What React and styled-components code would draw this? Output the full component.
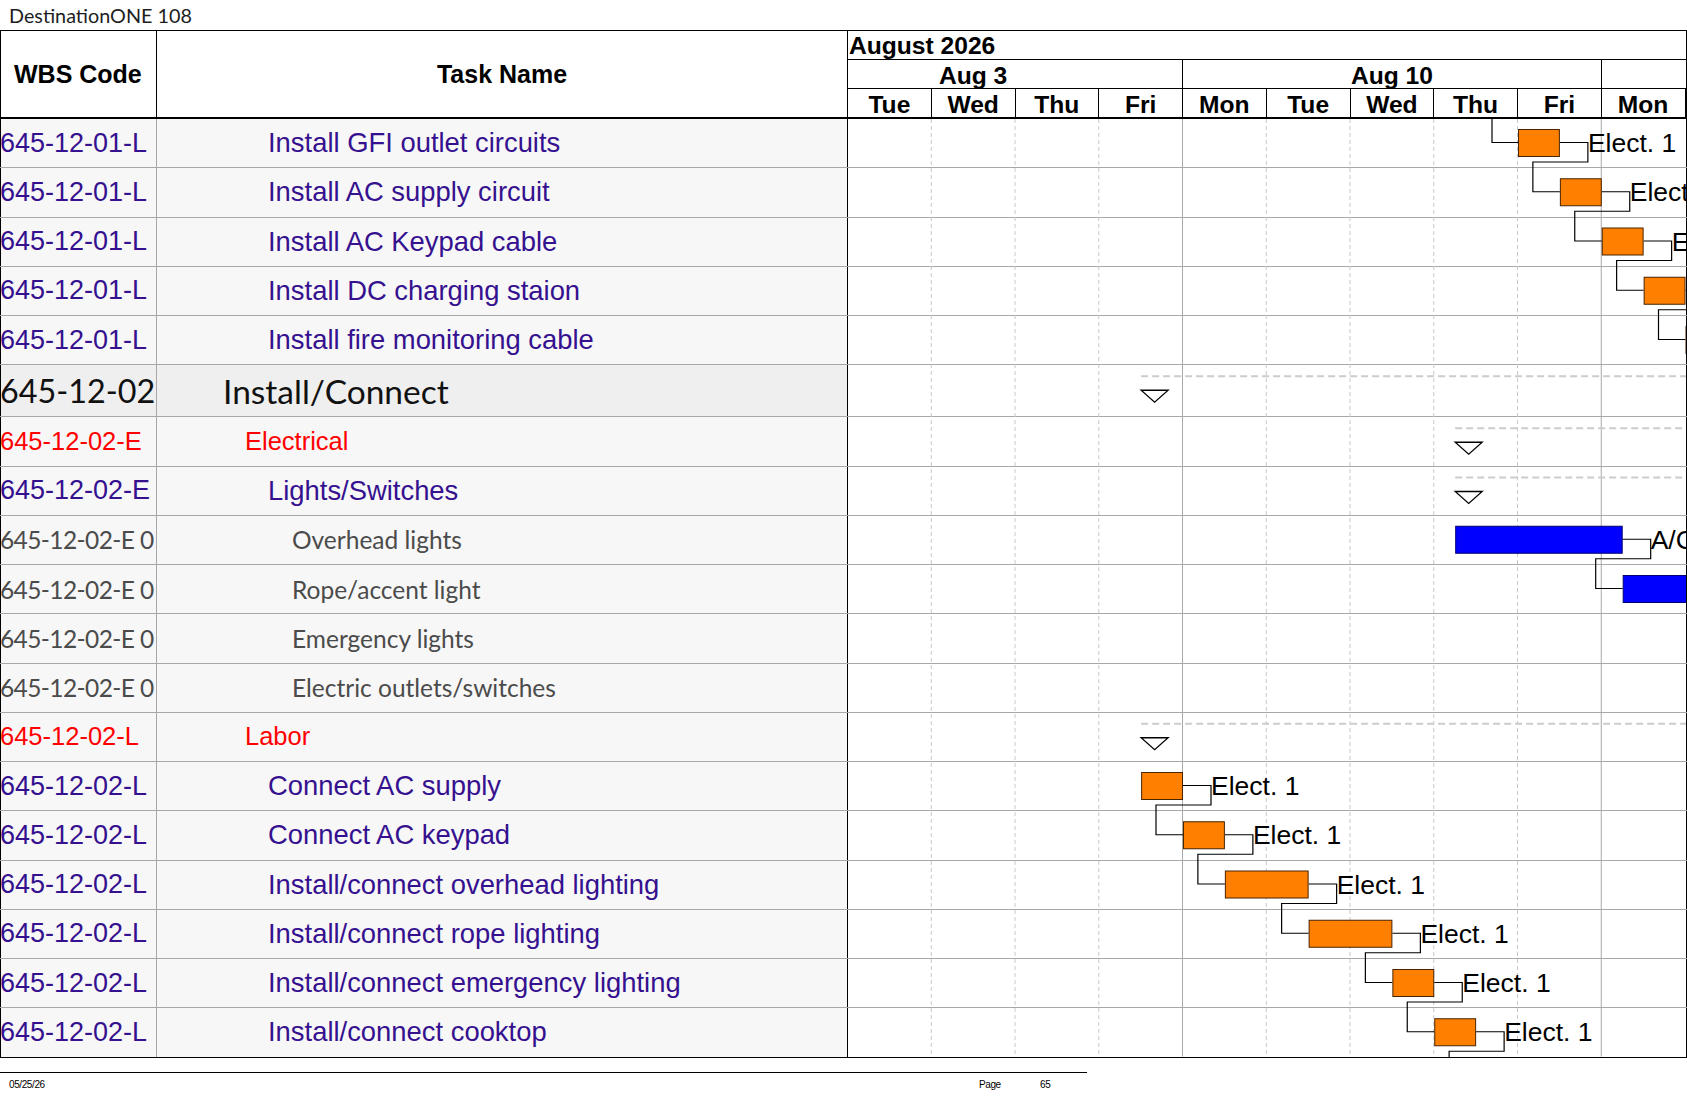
import React from 'react'
import styled, { createGlobalStyle } from 'styled-components'

const DAY = 83.75
const BAR_H = 27
const ORANGE = `#ff8000`
const BLUE = `#0000ff`

const GlobalStyle = createGlobalStyle`
  html, body { margin: 0; padding: 0; background: #fff; }
  body { font-family: "Liberation Sans", Arial, sans-serif; }
  * { box-sizing: border-box; }
`

const Page = styled.div`
  width: 1687px;
  height: 1097px;
  overflow: hidden;
  background: #fff;
`

const Title = styled.div`
  height: 30px;
  padding-left: 9px;
  display: flex;
  align-items: center;
  font-family: Lato, "Open Sans", sans-serif;
  font-size: 19.8px;
  color: #1e1e1e;
`

const Table = styled.div`
  border-top: 1px solid #000;
`

const Header = styled.div`
  display: grid;
  grid-template-columns: 157px 691px 839px;
  height: 88px;
  border-bottom: 2px solid #000;
`

const HeadCell = styled.div`
  display: flex;
  align-items: center;
  justify-content: ${p => p.$center ? `center` : `flex-start`};
  padding-left: ${p => p.$center ? 0 : 13}px;
  padding-top: 1px;
  border-right: 1px solid #000;
  border-left: ${p => p.$first ? `1px solid #000` : `none`};
  font-weight: bold;
  font-size: 25px;
  color: #000;
`

const Timescale = styled.div`
  display: flex;
  flex-direction: column;
  border-right: 1px solid #000;
  overflow: hidden;
`

const MonthRow = styled.div`
  height: 29px;
  border-bottom: 1px solid #000;
  padding-left: 1px;
  font-weight: bold;
  font-size: 24.6px;
  line-height: 30px;
  color: #000;
`

const TierRow = styled.div`
  display: flex;
  height: ${p => p.$h}px;
  margin-left: -${DAY}px;
  border-bottom: ${p => p.$last ? `none` : `1px solid #000`};
`

const TierCell = styled.div`
  flex: 0 0 ${p => p.$days * DAY}px;
  border-right: 1px solid #000;
  display: flex;
  align-items: center;
  justify-content: center;
  padding-top: 3px;
  font-weight: bold;
  font-size: 24.6px;
  color: #000;
`

const Body = styled.div`
  position: relative;
`

const Row = styled.div`
  display: grid;
  grid-template-columns: 157px 691px 839px;
  height: ${p => p.$h}px;
  border-bottom: 1px solid ${p => p.$last ? `#000` : `#a8a8a8`};
`

const WbsCell = styled.div`
  display: flex;
  align-items: center;
  overflow: hidden;
  white-space: nowrap;
  border-right: 1px solid #a8a8a8;
  border-left: 1px solid #000;
  background: ${p => p.$top ? `#efefef` : `#f7f7f7`};
`

const TaskCell = styled.div`
  display: flex;
  align-items: center;
  overflow: hidden;
  white-space: nowrap;
  padding-left: ${p => p.$indent}px;
  border-right: 1px solid #000;
  background: ${p => p.$top ? `#efefef` : `#f7f7f7`};
`

const ChartCell = styled.div`
  border-right: 1px solid #000;
  background: #fff;
`

const TEXT = {
  top: `font-family: Lato, "Open Sans", sans-serif; font-size: 33.5px; color: #111;`,
  group: `font-family: "Liberation Sans", Arial, sans-serif; font-size: 25.5px; color: #ff0000;`,
  task: `font-family: "Liberation Sans", Arial, sans-serif; font-size: 27.4px; color: #35118f;`,
  detail: `font-family: Lato, "Open Sans", sans-serif; font-size: 24.5px; color: #4b4b4b;`,
}

// the WBS column runs a touch tighter than the names beside it
const CODE = {
  top: `font-size: 32.3px;`,
  group: ``,
  task: `font-size: 27px;`,
  detail: `letter-spacing: -0.6px;`,
}

const CellText = styled.span`
  ${p => TEXT[p.$kind]}
  ${p => p.$code && CODE[p.$kind]}
  margin-left: -1px;
`

const GanttLayer = styled.svg`
  position: absolute;
  top: 0;
  left: 848px;
  pointer-events: none;
`

const Footer = styled.div`
  width: 1087px;
  margin-top: 14px;
  border-top: 1px solid #000;
  display: flex;
  align-items: center;
  height: 24px;
  padding-left: 9px;
  font-size: 10px;
  letter-spacing: -0.4px;
  color: #000;
`

const FooterDate = styled.span`
  flex: 1;
`

const FooterPage = styled.span`
  width: ${p => p.$w}px;
`

const INDENT = { 1: 67, 2: 89, 3: 112, 4: 136 }

const rows = [
  { wbs: `645-12-01-L`, name: `Install GFI outlet circuits`, kind: `task`, level: 3, bar: [8, 8.5, ORANGE], label: `Elect. 1` },
  { wbs: `645-12-01-L`, name: `Install AC supply circuit`, kind: `task`, level: 3, bar: [8.5, 9, ORANGE], label: `Elect. 1` },
  { wbs: `645-12-01-L`, name: `Install AC Keypad cable`, kind: `task`, level: 3, bar: [9, 9.5, ORANGE], label: `Elect. 1` },
  { wbs: `645-12-01-L`, name: `Install DC charging staion`, kind: `task`, level: 3, bar: [9.5, 10, ORANGE], label: `Elect. 1` },
  { wbs: `645-12-01-L`, name: `Install fire monitoring cable`, kind: `task`, level: 3, bar: [10, 10.5, ORANGE], label: `Elect. 1` },
  { wbs: `645-12-02`, name: `Install/Connect`, kind: `top`, level: 1, tri: 3.5, h: 52 },
  { wbs: `645-12-02-E`, name: `Electrical`, kind: `group`, level: 2, tri: 7.25 },
  { wbs: `645-12-02-E`, name: `Lights/Switches`, kind: `task`, level: 3, tri: 7.25 },
  { wbs: `645-12-02-E 0`, name: `Overhead lights`, kind: `detail`, level: 4, bar: [7.25, 9.25, BLUE], label: `A/C` },
  { wbs: `645-12-02-E 0`, name: `Rope/accent light`, kind: `detail`, level: 4, bar: [9.25, 10.5, BLUE] },
  { wbs: `645-12-02-E 0`, name: `Emergency lights`, kind: `detail`, level: 4 },
  { wbs: `645-12-02-E 0`, name: `Electric outlets/switches`, kind: `detail`, level: 4 },
  { wbs: `645-12-02-L`, name: `Labor`, kind: `group`, level: 2, tri: 3.5 },
  { wbs: `645-12-02-L`, name: `Connect AC supply`, kind: `task`, level: 3, bar: [3.5, 4, ORANGE], label: `Elect. 1` },
  { wbs: `645-12-02-L`, name: `Connect AC keypad`, kind: `task`, level: 3, bar: [4, 4.5, ORANGE], label: `Elect. 1` },
  { wbs: `645-12-02-L`, name: `Install/connect overhead lighting`, kind: `task`, level: 3, bar: [4.5, 5.5, ORANGE], label: `Elect. 1` },
  { wbs: `645-12-02-L`, name: `Install/connect rope lighting`, kind: `task`, level: 3, bar: [5.5, 6.5, ORANGE], label: `Elect. 1` },
  { wbs: `645-12-02-L`, name: `Install/connect emergency lighting`, kind: `task`, level: 3, bar: [6.5, 7, ORANGE], label: `Elect. 1` },
  { wbs: `645-12-02-L`, name: `Install/connect cooktop`, kind: `task`, level: 3, bar: [7, 7.5, ORANGE], label: `Elect. 1` },
]

// pairs of row indexes joined by a finish-to-start link
const links = [[0, 1], [1, 2], [2, 3], [3, 4], [8, 9], [13, 14], [14, 15], [15, 16], [16, 17], [17, 18]]

// first day is scrolled out of view on the left, so it carries no label
const days = [``, `Tue`, `Wed`, `Thu`, `Fri`, `Mon`, `Tue`, `Wed`, `Thu`, `Fri`, `Mon`]

const ROW_H = 49.25
const heights = rows.map(r => r.h || ROW_H)
const tops = heights.reduce((acc, h, i) => [...acc, acc[i] + h], [0])
const bodyHeight = tops[tops.length - 1]
const chartWidth = 838

const x = d => d * DAY
const barTop = i => tops[i] + 10
const mid = i => tops[i] + 10 + BAR_H / 2

const linkPath = (a, b) => {
  const e = x(rows[a].bar[1])
  const s = x(rows[b].bar[0])
  const drop = barTop(a) + BAR_H + 6
  return `M${e} ${mid(a)} H${e + 28} V${drop} H${s - 27} V${mid(b)} H${s}`
}

const Gantt = () => {
  const last = rows.length - 1
  const lastEnd = x(rows[last].bar[1])
  const lastDrop = barTop(last) + BAR_H + 6
  const firstStart = x(rows[0].bar[0])
  return (
    <GanttLayer width={chartWidth} height={bodyHeight} viewBox={`0 0 ${chartWidth} ${bodyHeight}`}>
      {[1, 2, 3, 4, 5, 6, 7, 8, 9].map(d =>
        <line key={`grid${d}`} x1={x(d) - 0.5} x2={x(d) - 0.5} y1={0} y2={bodyHeight - 1}
          stroke={d % 5 === 4 ? `#a8a8a8` : `#c8c8c8`} strokeWidth={1}
          strokeDasharray={d % 5 === 4 ? undefined : `4 3`} />
      )}
      {rows.map((r, i) => r.tri !== undefined &&
        <g key={`sum${i}`}>
          <line x1={x(r.tri)} x2={chartWidth} y1={tops[i] + 11} y2={tops[i] + 11}
            stroke="#cccccc" strokeWidth={2} strokeDasharray="7 4" />
          <polygon points={`${x(r.tri)},${tops[i] + 25} ${x(r.tri) + 27},${tops[i] + 25} ${x(r.tri) + 13.5},${tops[i] + 37}`}
            fill="#fff" stroke="#000" strokeWidth={1.3} />
        </g>
      )}
      <path d={`M${firstStart - 26} 0 V${mid(0)} H${firstStart}`} fill="none" stroke="#000" strokeWidth={1.2} />
      {links.map(([a, b]) =>
        <path key={`link${a}`} d={linkPath(a, b)} fill="none" stroke="#000" strokeWidth={1.2} />
      )}
      <path d={`M${lastEnd} ${mid(last)} H${lastEnd + 28} V${lastDrop} H${lastEnd - 27} V${bodyHeight}`}
        fill="none" stroke="#000" strokeWidth={1.2} />
      {rows.map((r, i) => r.bar &&
        <rect key={`bar${i}`} x={x(r.bar[0]) + 0.5} y={barTop(i) + 0.5}
          width={x(r.bar[1]) - x(r.bar[0]) - 1} height={BAR_H}
          fill={r.bar[2]} stroke={r.bar[2] === BLUE ? `#000070` : `#4a2300`} strokeWidth={1} />
      )}
      {rows.map((r, i) => r.label &&
        <text key={`lab${i}`} x={x(r.bar[1]) + 28} y={mid(i) + 9.5}
          fontFamily="Liberation Sans, Arial, sans-serif" fontSize={26.5} fill="#000">{r.label}</text>
      )}
    </GanttLayer>
  )
}

const App = () =>
  <Page>
    <GlobalStyle />
    <Title>DestinationONE 108</Title>
    <Table>
      <Header>
        <HeadCell $first>WBS Code</HeadCell>
        <HeadCell $center>Task Name</HeadCell>
        <Timescale>
          <MonthRow>August 2026</MonthRow>
          <TierRow $h={29}>
            <TierCell $days={5}>Aug 3</TierCell>
            <TierCell $days={5}>Aug 10</TierCell>
            <TierCell $days={5} />
          </TierRow>
          <TierRow $h={28} $last>
            {days.map((d, i) =>
              <TierCell key={`day${i}`} $days={1}>{d}</TierCell>
            )}
          </TierRow>
        </Timescale>
      </Header>
      <Body>
        {rows.map((r, i) =>
          <Row key={`row${i}`} $h={heights[i]} $last={i === rows.length - 1}>
            <WbsCell $top={r.kind === `top`}><CellText $code $kind={r.kind}>{r.wbs}</CellText></WbsCell>
            <TaskCell $top={r.kind === `top`} $indent={INDENT[r.level]}><CellText $kind={r.kind}>{r.name}</CellText></TaskCell>
            <ChartCell />
          </Row>
        )}
        <Gantt />
      </Body>
    </Table>
    <Footer>
      <FooterDate>05/25/26</FooterDate>
      <FooterPage $w={61}>Page</FooterPage>
      <FooterPage $w={47}>65</FooterPage>
    </Footer>
  </Page>

export default App
